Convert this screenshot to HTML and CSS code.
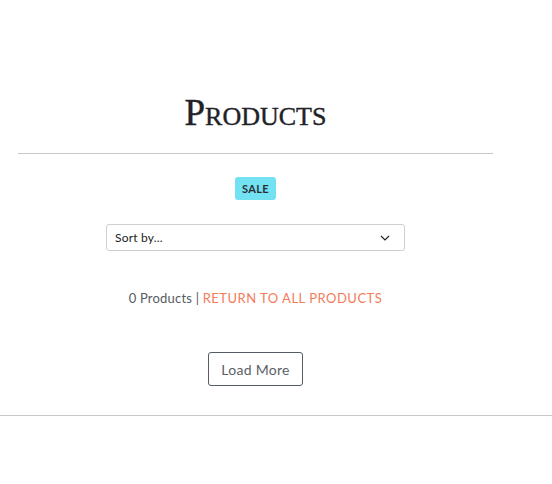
FILE: index.html
```html
<!DOCTYPE html>
<html>
<head>
<meta charset="utf-8">
<link rel="stylesheet" href="styles.css">
</head>
<body>
<main class="page">
  <section class="collection">
    <h1 class="title">Products</h1>
    <hr class="divider">
    <div class="tags">
      <span class="tag">SALE</span>
    </div>
    <div class="sort">
      <span class="sort-label">Sort by...</span>
      <svg class="chev" width="10" height="6" viewBox="0 0 10 6"><path d="M1 1l4 4 4-4" fill="none" stroke="#222" stroke-width="1.2"/></svg>
    </div>
    <p class="count">0 Products <span class="sep">|</span> <a class="return" href="#">RETURN TO ALL PRODUCTS</a></p>
    <div class="more">
      <button class="load">Load More</button>
    </div>
  </section>
  <hr class="footer-line">
</main>
</body>
</html>
```
FILE: styles.css
```css
html, body {
  margin: 0;
  padding: 0;
  background: #fff;
}
body {
  font-family: "Lato", "Noto Sans", sans-serif;
  color: #555;
}
.page {
  padding-top: 88px;
}
.collection {
  width: 475px;
  margin-left: 18px;
  display: flex;
  flex-direction: column;
  align-items: center;
}
.title {
  margin: 0;
  font-family: "Liberation Serif", serif;
  font-variant: small-caps;
  font-weight: 400;
  font-size: 37px;
  line-height: 50px;
  color: #1f2327;
  letter-spacing: 0;
  -webkit-text-stroke: 0.4px #1f2327;
}
.divider {
  width: 100%;
  margin: 15px 0 0;
  border: 0;
  border-top: 1px solid #c8c8c8;
}
.tags {
  margin-top: 23px;
  display: flex;
}
.tag {
  background: #72e2f3;
  color: #2a2e33;
  font-size: 11px;
  font-weight: 700;
  letter-spacing: 0.3px;
  border-radius: 3px;
  padding: 0 7px;
  height: 23px;
  line-height: 23px;
}
.sort {
  margin-top: 24px;
  height: 25px;
  border: 1px solid #cfcfcf;
  border-radius: 3px;
  display: flex;
  align-items: center;
  justify-content: space-between;
  padding: 0 14px 0 8px;
  box-sizing: content-box;
  width: 275px;
}
.sort-label {
  font-size: 12px;
  color: #222;
  letter-spacing: 0.2px;
}
.chev {
  display: block;
}
.count {
  margin: 38px 0 0;
  font-size: 13px;
  line-height: 18px;
  color: #555c63;
  letter-spacing: 0.2px;
}
.sep {
  color: #555c63;
}
.return {
  color: #f47b5a;
  text-decoration: none;
  letter-spacing: 0.5px;
}
.more {
  margin-top: 45px;
}
.load {
  font-family: "Lato", "Noto Sans", sans-serif;
  font-size: 14px;
  color: #5a6168;
  background: #fff;
  border: 1px solid #555c63;
  border-radius: 3px;
  height: 34px;
  padding: 0 12px;
  letter-spacing: 0.3px;
}
.footer-line {
  margin: 29px 0 0;
  border: 0;
  border-top: 1px solid #c8c8c8;
}
```
